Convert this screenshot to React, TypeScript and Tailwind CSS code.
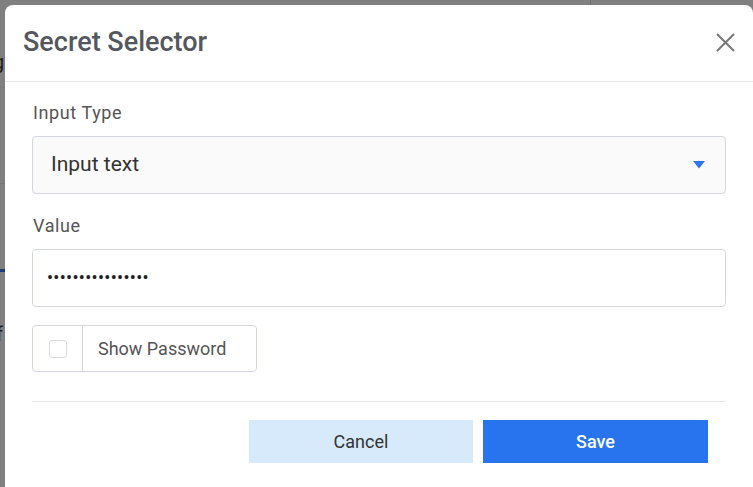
import React from "react";

export default function App() {
  return (
    <div
      className="relative w-[753px] h-[487px] overflow-hidden bg-[#808080]"
      style={{ fontFamily: "Roboto, 'Noto Sans', sans-serif" }}
    >
      {/* underlying page fragments, dimmed by overlay */}
      <div className="absolute left-[590px] top-0 h-[6px] w-px bg-[#6b6b6b]" />
      <div className="absolute left-0 top-[87px] h-px w-[6px] bg-[#777]" />
      <div className="absolute left-0 top-[183px] h-px w-[6px] bg-[#777]" />
      <div className="absolute left-[-7px] top-[50px] text-[20px] leading-[24px] text-[#1f1f1f]">g</div>
      <div className="absolute left-0 top-[269px] h-[3px] w-[6px] bg-[#1d3c73]" />
      <div className="absolute left-[-4px] top-[322px] text-[20px] leading-[24px] text-[#1f1f1f]">f</div>

      {/* modal */}
      <div className="absolute left-[5px] top-[5px] w-[748px] h-[500px] rounded-[8px] bg-white flex flex-col">
        <div className="h-[77px] flex items-center justify-between pl-[18px] pr-[18px] border-b border-[#e6e6e6] shrink-0">
          <h2 className="text-[27px] font-medium text-[#54585e] mt-[-1px]">Secret Selector</h2>
          <svg width="19" height="19" viewBox="0 0 19 19" className="mt-[-1px]">
            <path d="M1 1 L18 18 M18 1 L1 18" stroke="#777" strokeWidth="2" fill="none" />
          </svg>
        </div>

        <div className="flex flex-col px-[27px] pt-[19px]">
          <label className="h-[24px] leading-[24px] text-[18px] text-[#555] tracking-[0.6px] pl-px">Input Type</label>
          <div className="mt-[11px] h-[58px] rounded-[4px] border border-[#d3d7dd] bg-[#fafafa] flex items-center justify-between pl-[18px] pr-[20px]">
            <span className="text-[21px] text-[#333]">Input text</span>
            <svg width="12" height="8" viewBox="0 0 12 8">
              <path d="M0 0 L12 0 L6 7.5 Z" fill="#2f74e8" />
            </svg>
          </div>

          <label className="mt-[20px] h-[24px] leading-[24px] text-[18px] text-[#555] tracking-[0.6px] pl-px">Value</label>
          <div className="mt-[11px] h-[58px] rounded-[4px] border border-[#d3d7dd] bg-white flex items-center pl-[14px]">
            <span className="text-[18px] text-[#222] tracking-[0.3px] leading-none">••••••••••••••••</span>
          </div>

          <div className="mt-[18px] h-[47px] w-[225px] rounded-[4px] border border-[#d3d7dd] flex items-stretch">
            <div className="w-[50px] border-r border-[#d3d7dd] flex items-center justify-center">
              <div className="w-[18px] h-[18px] rounded-[3px] border border-[#d6d9dd] bg-white" />
            </div>
            <div className="flex items-center pl-[15px] text-[18px] text-[#555]">Show Password</div>
          </div>

          <div className="mt-[29px] h-px bg-[#e6e6e6] mr-px" />

          <div className="mt-[18px] flex justify-end gap-[10px] pr-[18px]">
            <button className="w-[224px] h-[43px] bg-[#d6eafb] text-[18px] text-[#333]">Cancel</button>
            <button className="w-[225px] h-[43px] bg-[#2874ef] text-[18px] font-medium text-white">Save</button>
          </div>
        </div>
      </div>
    </div>
  );
}
